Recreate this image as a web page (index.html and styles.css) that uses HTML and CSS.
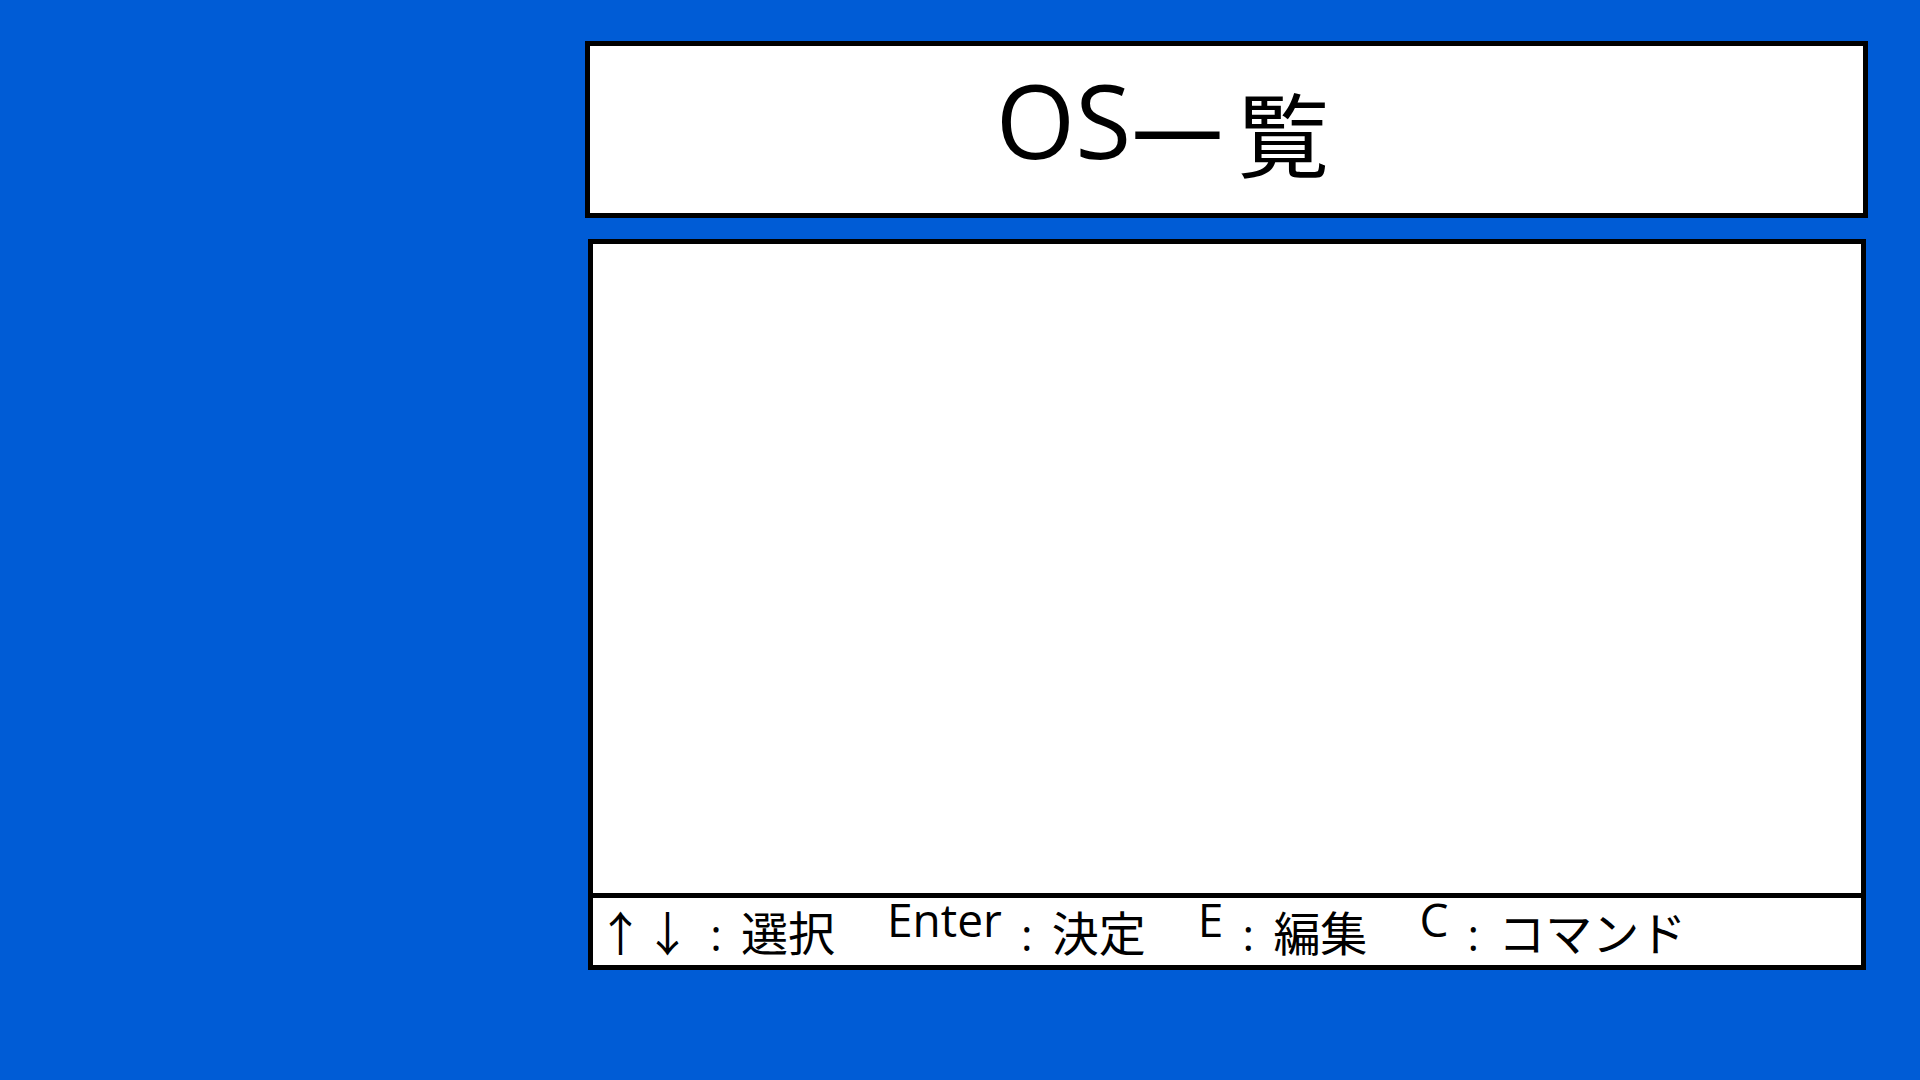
FILE: index.html
```html
<!DOCTYPE html>
<html lang="ja">
<head>
<meta charset="utf-8">
<title>OS一覧</title>
<link rel="stylesheet" href="styles.css">
</head>
<body>
<div class="screen">
  <header class="title-box">
    <h1 class="title"><span class="lat">OS</span><span class="cjk">一覧</span></h1>
  </header>
  <main class="list-box">
    <div class="list-area"></div>
    <footer class="help">
      <div class="group"><span class="arrows">↑↓</span><span class="sep">:</span>選択</div>
      <div class="group"><span class="key">Enter</span><span class="sep">:</span>決定</div>
      <div class="group"><span class="key">E</span><span class="sep">:</span>編集</div>
      <div class="group"><span class="key">C</span><span class="sep">:</span>コマンド</div>
    </footer>
  </main>
</div>
</body>
</html>
```
FILE: styles.css
```css
* { box-sizing: border-box; }
html, body {
  margin: 0;
  padding: 0;
  width: 1920px;
  height: 1080px;
  background: #005cd6;
  overflow: hidden;
}
.screen {
  display: flex;
  flex-direction: column;
  align-items: flex-start;
  padding: 41px 0 0 585px;
}
.title-box {
  width: 1283px;
  height: 177px;
  background: #fff;
  border: 5px solid #000;
  padding-top: 39px;
  padding-right: 114px;
}
.title {
  margin: 0;
  font-weight: normal;
  text-align: center;
  font-family: "Noto Sans CJK JP", sans-serif;
  font-size: 92px;
  line-height: 92px;
  color: #000;
}
.title .lat {
  font-family: "Open Sans", sans-serif;
  font-size: 102px;
  line-height: 0;
  vertical-align: 12px;
}
.title .cjk {
  margin-left: 0;
  letter-spacing: 14px;
}
.list-box {
  margin-top: 21px;
  margin-left: 3px;
  width: 1278px;
  height: 731px;
  background: #fff;
  border: 5px solid #000;
  display: flex;
  flex-direction: column;
}
.list-area {
  flex: 1;
}
.help {
  height: 72px;
  border-top: 5px solid #000;
  display: flex;
  gap: 52px;
  padding: 9px 0 0 4px;
  font-family: "Noto Sans CJK JP", sans-serif;
  font-size: 47px;
  line-height: 47px;
  color: #000;
  white-space: nowrap;
}
.help .key {
  font-family: "Open Sans", sans-serif;
  font-size: 46px;
  line-height: 0;
  vertical-align: 14px;
}
.help .sep {
  display: inline-block;
  width: 50px;
  text-align: center;
  font-family: "Open Sans", sans-serif;
  font-size: 44px;
  line-height: 0;
}
```
